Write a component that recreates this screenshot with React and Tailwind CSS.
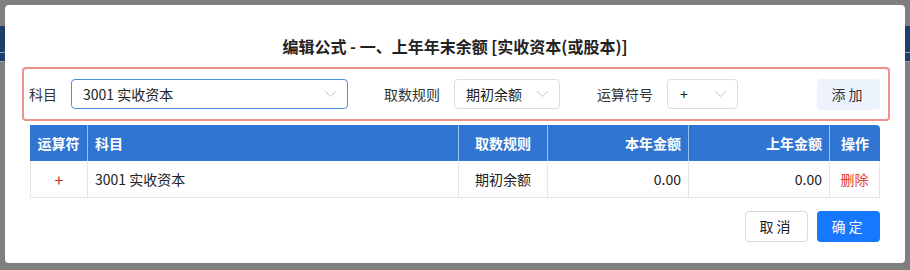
import React from "react";

const font = { fontFamily: '"Noto Sans CJK SC", "Noto Sans", sans-serif' };

function Chevron() {
  return (
    <svg width="13" height="8" viewBox="0 0 13 8" fill="none">
      <path d="M1 1 L6.5 6.5 L12 1" stroke="#c4c4c4" strokeWidth="1" />
    </svg>
  );
}

export default function App() {
  return (
    <div className="relative w-[910px] h-[270px] overflow-hidden bg-[#7f7f7f]" style={font}>
      {/* background page (dimmed) */}
      <div className="h-[26px]" />
      <div className="h-[35px] bg-[#1d3d6b] flex flex-col">
        <div className="h-[26px]" />
        <div className="h-px bg-[#8a9ab3]" />
      </div>
      <div className="h-px bg-[#9a9a9a]" />

      {/* modal */}
      <div className="absolute left-[5px] top-[5px] w-[900px] h-[258px] bg-white rounded-[4px] flex flex-col">
        <div className="pt-[30px] text-center text-[16px] font-bold text-[#222] leading-[22px]">
          编辑公式 - 一、上年年末余额 [实收资本(或股本)]
        </div>

        <div className="mt-[10px] ml-[17px] mr-[15px] h-[54px] border-2 border-[#ec928a] rounded-[4px] flex items-center pl-[5px] pr-[8px] text-[14px] text-[#333]">
          <span className="w-[28px]">科目</span>
          <div className="ml-[14px] w-[277px] h-[30px] border border-[#4b8fe0] rounded-[4px] flex items-center justify-between pl-[11px] pr-[10px]">
            <span className="text-[#222]">3001 实收资本</span>
            <Chevron />
          </div>
          <span className="ml-[36px]">取数规则</span>
          <div className="ml-[14px] w-[106px] h-[30px] border border-[#dcdcdc] rounded-[4px] flex items-center justify-between pl-[11px] pr-[10px]">
            <span className="text-[#222]">期初余额</span>
            <Chevron />
          </div>
          <span className="ml-[37px]">运算符号</span>
          <div className="ml-[14px] w-[71px] h-[30px] border border-[#dcdcdc] rounded-[4px] flex items-center justify-between pl-[12px] pr-[10px]">
            <span className="text-[#222]">+</span>
            <Chevron />
          </div>
          <div className="ml-auto w-[63px] h-[31px] bg-[#edf3fd] rounded-[4px] flex items-center justify-center text-[#333] tracking-[3px]">
            添加
          </div>
        </div>

        <div className="mt-[4px] ml-[25px] w-[850px] text-[14px]">
          <div className="flex h-[36px] bg-[#2f75d1] text-white font-bold rounded-tr-[4px]">
            <div className="w-[58px] flex items-center justify-center border-r border-[#9cc0ee]">运算符</div>
            <div className="w-[371px] flex items-center pl-[7px] border-r border-[#9cc0ee]">科目</div>
            <div className="w-[89px] flex items-center justify-center border-r border-[#9cc0ee]">取数规则</div>
            <div className="w-[141px] flex items-center justify-end pr-[7px] border-r border-[#9cc0ee]">本年金额</div>
            <div className="w-[141px] flex items-center justify-end pr-[7px] border-r border-[#9cc0ee]">上年金额</div>
            <div className="w-[50px] flex items-center justify-center">操作</div>
          </div>
          <div className="flex h-[37px] text-[#222] border-b border-l border-r border-[#e6e6e6]">
            <div className="w-[57px] flex items-center justify-center border-r border-[#e6e6e6] text-[#c62b22] text-[16px]">+</div>
            <div className="w-[371px] flex items-center pl-[7px] border-r border-[#e6e6e6]">3001 实收资本</div>
            <div className="w-[89px] flex items-center justify-center border-r border-[#e6e6e6]">期初余额</div>
            <div className="w-[141px] flex items-center justify-end pr-[7px] border-r border-[#e6e6e6]">0.00</div>
            <div className="w-[141px] flex items-center justify-end pr-[7px] border-r border-[#e6e6e6]">0.00</div>
            <div className="w-[49px] flex items-center justify-center text-[#e0432b]">删除</div>
          </div>
        </div>

        <div className="mt-[13px] mr-[25px] flex justify-end gap-[9px] text-[14px]">
          <div className="w-[63px] h-[31px] border border-[#d9d9d9] rounded-[4px] flex items-center justify-center text-[#222] tracking-[3px]">
            取消
          </div>
          <div className="w-[63px] h-[31px] bg-[#1677ff] rounded-[4px] flex items-center justify-center text-white tracking-[3px]">
            确定
          </div>
        </div>
      </div>
    </div>
  );
}
